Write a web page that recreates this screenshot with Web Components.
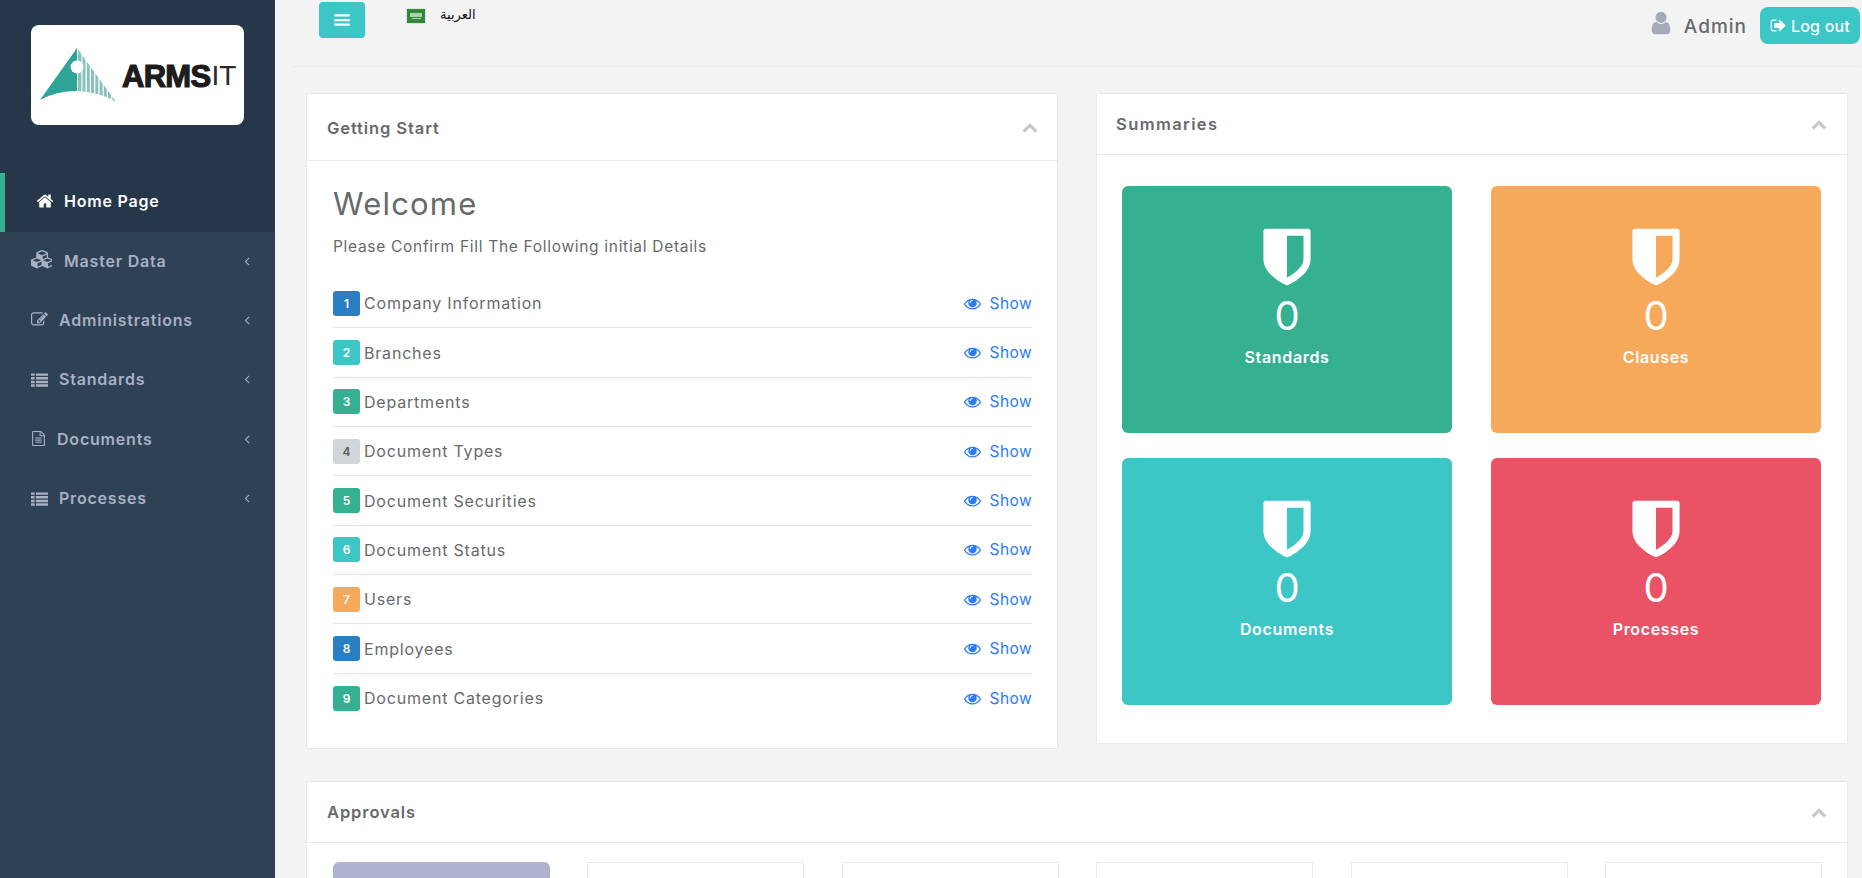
<!DOCTYPE html>
<html lang="en"><head><meta charset="utf-8"><title>ARMS IT</title>
<style>
html,body{margin:0;padding:0;height:878px;overflow:hidden;background:#f3f3f4;font-family:Inter,"Open Sans",sans-serif;color:#676a6c}
</style></head><body>
<dash-app>
  <side-bar slot="side">
    <nav-item icon="home" label="Home Page" active style="--pad:36px;--isize:18px;--gap:10px"></nav-item>
    <nav-item icon="cubes" label="Master Data" style="--pad:31px;--isize:21px;--gap:12px"></nav-item>
    <nav-item icon="edit" label="Administrations" style="--pad:31px;--isize:17px;--gap:11px"></nav-item>
    <nav-item icon="list" label="Standards" style="--pad:31px;--isize:17px;--gap:11px"></nav-item>
    <nav-item icon="file" label="Documents" style="--pad:31px;--isize:15px;--gap:11px"></nav-item>
    <nav-item icon="list" label="Processes" style="--pad:31px;--isize:17px;--gap:11px"></nav-item>
  </side-bar>
  <top-bar></top-bar>
  <div style="display:grid;grid-template-columns:752px 752px;column-gap:38px;align-items:start;margin-bottom:32px">
    <panel-box heading="Getting Start" style="--head:67px;--pl:20px;--tshift:1px">
      <welcome-block>
        <step-row n="1" color="#2a7fc4" label="Company Information"></step-row>
        <step-row n="2" color="#3cc6c6" label="Branches"></step-row>
        <step-row n="3" color="#35b192" label="Departments"></step-row>
        <step-row n="4" color="#d1d6db" ink="#5e5e5e" label="Document Types"></step-row>
        <step-row n="5" color="#35b192" label="Document Securities"></step-row>
        <step-row n="6" color="#3cc6c6" label="Document Status"></step-row>
        <step-row n="7" color="#f6a95a" label="Users"></step-row>
        <step-row n="8" color="#2a7fc4" label="Employees"></step-row>
        <step-row n="9" color="#35b192" label="Document Categories" last></step-row>
      </welcome-block>
    </panel-box>
    <panel-box heading="Summaries" style="--head:61px;--ts:1.4px;--pr:20px">
      <stat-grid>
        <stat-tile color="#35b192" label="Standards"></stat-tile>
        <stat-tile color="#f6a95a" label="Clauses"></stat-tile>
        <stat-tile color="#3cc6c6" label="Documents"></stat-tile>
        <stat-tile color="#ea5266" label="Processes"></stat-tile>
      </stat-grid>
    </panel-box>
  </div>
  <panel-box heading="Approvals" style="--head:61px;--pl:20px;--pr:20px">
    <approval-row>
      <approval-card filled></approval-card><approval-card></approval-card><approval-card></approval-card><approval-card></approval-card><approval-card></approval-card><approval-card></approval-card>
    </approval-row>
  </panel-box>
</dash-app>
<script>
const ICONS={
home:[1792,'M1472 992v480q0 26-19 45t-45 19h-384v-384h-256v384h-384q-26 0-45-19t-19-45v-480q0-1 .5-3t.5-3l575-474 575 474q1 2 1 6zm223-69l-62 74q-8 9-21 11h-3q-13 0-21-7l-692-577-692 577q-12 8-24 7-13-2-21-11l-62-74q-8-10-7-23.500t11-21.500l719-599q32-26 76-26t76 26l244 204v-195q0-14 9-23t23-9h192q14 0 23 9t9 23v408l219 182q10 8 11 21.500t-7 23.500z'],
cubes:[2048,'M640 1632l384-192v-314l-384 164v342zm-64-454l404-173-404-173-404 173zm1088 454l384-192v-314l-384 164v342zm-64-454l404-173-404-173-404 173zm-448-293l384-165v-266l-384 164v267zm-64-379l441-189-441-189-441 189zm1088 518v416q0 36-19 67t-52 47l-448 224q-25 14-57 14t-57-14l-448-224q-5-2-7-4-2 2-7 4l-448 224q-25 14-57 14t-57-14l-448-224q-33-16-52-47t-19-67v-416q0-38 21.500-70t56.500-48l434-186v-400q0-38 21.500-70t56.500-48l448-192q23-10 50-10t50 10l448 192q35 16 56.500 48t21.500 70v400l434 186q36 16 57 48t21 70z'],
edit:[1792,'M888 1184l116-116-152-152-116 116v56h96v96h56zm440-720q-16-16-33 1l-350 350q-17 17-1 33t33-1l350-350q17-17 1-33zm80 594v190q0 119-84.500 203.500t-203.500 84.500h-832q-119 0-203.500-84.500t-84.500-203.500v-832q0-119 84.500-203.500t203.500-84.500h832q63 0 117 25 15 7 18 23 3 17-9 29l-49 49q-14 14-32 8-23-6-45-6h-832q-66 0-113 47t-47 113v832q0 66 47 113t113 47h832q66 0 113-47t47-113v-126q0-13 9-22l64-64q15-15 35-7t20 29zm-96-738l288 288-672 672h-288v-288zm444 132l-92 92-288-288 92-92q28-28 68-28t68 28l152 152q28 28 28 68t-28 68z'],
list:[1792,'M0 256h384v256h-384zM512 256h1280v256h-1280zM0 640h384v256h-384zM512 640h1280v256h-1280zM0 1024h384v256h-384zM512 1024h1280v256h-1280zM0 1408h384v256h-384zM512 1408h1280v256h-1280z'],
file:[1792,'M1596 380q28 28 48 76t20 88v1152q0 40-28 68t-68 28h-1344q-40 0-68-28t-28-68v-1600q0-40 28-68t68-28h896q40 0 88 20t76 48zm-444-244v376h376q-10-29-22-41l-313-313q-12-12-41-22zm384 1528v-1024h-416q-40 0-68-28t-28-68v-416h-768v1536h1280zm-1024-864q0-14 9-23t23-9h704q14 0 23 9t9 23v64q0 14-9 23t-23 9h-704q-14 0-23-9t-9-23v-64zm736 224q14 0 23 9t9 23v64q0 14-9 23t-23 9h-704q-14 0-23-9t-9-23v-64q0-14 9-23t23-9h704zm0 256q14 0 23 9t9 23v64q0 14-9 23t-23 9h-704q-14 0-23-9t-9-23v-64q0-14 9-23t23-9h704z'],
user:[1792,'M1536 1399q0 109-62.500 187t-150.500 78h-854q-88 0-150.500-78t-62.500-187q0-85 8.500-160.500t31.500-152 58.500-131 94-89 134.500-34.500q131 128 313 128t313-128q76 0 134.500 34.500t94 89 58.500 131 31.500 152 8.500 160.500zm-256-887q0 159-112.500 271.500t-271.500 112.500-271.500-112.500-112.500-271.500 112.500-271.500 271.500-112.500 271.500 112.500 112.500 271.500z'],
signout:[1792,'M704 1440q0 4 1 20t.5 26.500-3 23.500-10 19.500-20.500 6.500h-320q-119 0-203.500-84.500t-84.500-203.500v-704q0-119 84.500-203.500t203.500-84.500h320q13 0 22.500 9.500t9.500 22.500q0 4 1 20t.5 26.500-3 23.500-10 19.500-20.500 6.500h-320q-66 0-113 47t-47 113v704q0 66 47 113t113 47h312l11.500 1 11.500 3 8 5.500 7 9 2 13.500zm928-544q0 26-19 45l-544 544q-19 19-45 19t-45-19-19-45v-288h-448q-26 0-45-19t-19-45v-384q0-26 19-45t45-19h448v-288q0-26 19-45t45-19 45 19l544 544q19 19 19 45z'],
eye:[1792,'M1664 960q-152-236-381-353 61 104 61 225 0 185-131.500 316.500t-316.500 131.500-316.500-131.500-131.500-316.500q0-121 61-225-229 117-381 353 133 205 333.500 326.500t434.500 121.500 434.500-121.500 333.500-326.500zm-720-384q0-20-14-34t-34-14q-125 0-214.500 89.500t-89.500 214.500q0 20 14 34t34 14 34-14 14-34q0-86 61-147t147-61q20 0 34-14t14-34zm848 384q0 34-20 69-140 230-376.500 368.500t-499.500 138.500-499.500-139-376.500-368q-20-35-20-69t20-69q140-229 376.500-368t499.500-139 499.500 139 376.500 368q20 35 20 69z'],
shield:[1792,'M1344 960v-640h-448v1137q119-63 213-137 235-184 235-360zm192-768v768q0 86-33.500 170.500t-83 150-118 127.500-126.500 103-121 77.500-89.500 49.500-42.500 20q-12 6-26 6t-26-6q-16-7-42.500-20t-89.500-49.500-121-77.500-126.500-103-118-127.500-83-150-33.500-170.500v-768q0-26 19-45t45-19h1152q26 0 45 19t19 45z'],
angle:[1792,'M1203 544q0 13-10 23l-393 393 393 393q10 10 10 23t-10 23l-50 50q-10 10-23 10t-23-10l-466-466q-10-10-10-23t10-23l466-466q10-10 23-10t23 10l50 50q10 10 10 23z'],
chevron:[1792,'M1683 1331l-166 165q-19 19-45 19t-45-19l-531-531-531 531q-19 19-45 19t-45-19l-166-165q-19-19-19-45.500t19-45.500l742-741q19-19 45-19t45 19l742 741q19 19 19 45.500t-19 45.500z'],
bars:[1792,'M128 320h1536v224h-1536zM128 784h1536v224h-1536zM128 1248h1536v224h-1536z']
};
function def(name,css,html){
  customElements.define(name,class extends HTMLElement{
    connectedCallback(){
      if(this.shadowRoot)return;
      const a=n=>this.getAttribute(n);
      this.attachShadow({mode:'open'}).innerHTML='<style>'+css+'</style>'+(typeof html==='function'?html(a,this):html);
    }
  });
}
def('fa-icon',':host{display:inline-flex;flex:none;width:var(--s,16px);height:var(--s,16px)}svg{width:100%;height:100%;display:block;fill:currentColor}',
 a=>{const i=ICONS[a('name')];return `<svg viewBox="0 0 ${i[0]} ${i[0]}" aria-hidden="true"><path d="${i[1]}"/></svg>`});

def('dash-app',`:host{display:flex;width:1862px;height:878px;overflow:hidden}
 .side{flex:none;width:275px;height:878px}
 main{flex:1;min-width:0;height:878px;overflow:hidden;padding:0 14px 0 31px;box-sizing:border-box}`,
 `<div class="side"><slot name="side"></slot></div><main><slot></slot></main>`);

def('arms-logo',`:host{display:flex;align-items:center;width:213px;height:100px;background:#fff;border-radius:8px;box-sizing:border-box;padding:23px 0 23px 9px;gap:6px;overflow:hidden}
 svg{flex:none;width:76px;height:54px;display:block}
 .t{font:700 31px/1 "Liberation Sans",sans-serif;color:#1c1c1c;-webkit-text-stroke:1.2px #1c1c1c;display:flex;align-items:center;white-space:nowrap;margin-top:2px;letter-spacing:-.7px}
 .it{font-weight:400;-webkit-text-stroke:0;letter-spacing:0;font-size:28px;margin-left:1px;color:#2a2a2a}`,
 `<svg viewBox="0 0 76 54"><defs><clipPath id="r"><path d="M37 0 76 54Q60 44 37 43V0Z"/></clipPath></defs>
 <path d="M37 0V43Q16 43 0 52Z" fill="#2ea497"/>
 <g clip-path="url(#r)" fill="#86c2bb"><rect x="38" y="0" width="3.400" height="54"/><rect x="42.500" y="0" width="3" height="54"/><rect x="46.800" y="0" width="3" height="54"/><rect x="51" y="0" width="3" height="54"/><rect x="55.300" y="0" width="3" height="54"/><rect x="59.600" y="0" width="3" height="54"/><rect x="63.800" y="0" width="3" height="54"/><rect x="68" y="0" width="3" height="54"/><rect x="72.200" y="0" width="3" height="54"/></g>
 <circle cx="37" cy="19" r="6.500" fill="#fff"/></svg>
 <div class="t">ARMS<span class="it">IT</span></div>`);

def('side-bar',`:host{display:block;width:275px;height:878px;background:#2f4155;overflow:hidden}
 .head{background:#26374a;height:173px;box-sizing:border-box;padding:25px 0 0 31px}`,
 `<div class="head"><arms-logo></arms-logo></div><slot></slot>`);

def('nav-item',`:host{display:flex;align-items:center;height:59.400px;box-sizing:border-box;padding:0 21px 3px var(--pad,31px);color:#a7b1c2;position:relative;font-weight:600;font-size:16px;letter-spacing:.8px}
 :host([active]){color:#fff;background:#26374a}
 :host([active])::before{content:"";position:absolute;left:0;top:0;bottom:0;width:5px;background:#35b192}
 fa-icon{--s:var(--isize,17px);margin-right:var(--gap,11px)}
 .l{flex:1;white-space:nowrap}
 .a{--s:14px;margin:0}`,
 (a,el)=>`<fa-icon name="${a('icon')}"></fa-icon><span class="l">${a('label')}</span>${el.hasAttribute('active')?'':'<fa-icon class="a" name="angle"></fa-icon>'}`);

def('top-bar',`:host{display:flex;align-items:flex-start;height:67px;margin:0 -12px 26px -13px;border-bottom:1px solid #e7eaec;box-sizing:border-box}
 .menu{margin:2px 0 0 26px;width:46px;height:36px;border-radius:4px;background:#3cc6c6;color:#fff;display:flex;align-items:center;justify-content:center;--s:18px}
 .flag{margin:9px 0 0 42px;width:18px;height:14px;background:#2f8b3a;display:flex;flex-direction:column;align-items:center;justify-content:center;gap:1px;box-shadow:0 0 1px #6b8f6e}
 .flag i{display:block;background:#a9d2a9}.flag i:first-child{width:12px;height:4px}.flag i:last-child{width:9px;height:1px}
 .ar{margin:6px 0 0 15px;font:13px/17px "Liberation Sans","DejaVu Sans",sans-serif;color:#111}
 .sp{flex:1}
 .user{--s:26px;color:#a4aaba;margin:10px 10px 0 0}
 .name{margin:14px 13px 0 0;font-size:19px;line-height:25px;font-weight:500;letter-spacing:1px;color:#676a6c}
 .out{margin-top:7px;width:100px;height:37px;box-sizing:border-box;border-radius:8px;background:#3cc6c6;color:#fff;display:flex;align-items:center;justify-content:center;gap:4px;font-size:16px;font-weight:500;letter-spacing:.2px;white-space:nowrap;--s:17px}`,
 `<div class="menu"><fa-icon name="bars"></fa-icon></div><div class="flag"><i></i><i></i></div><span class="ar" dir="rtl" lang="ar">العربية</span><span class="sp"></span><fa-icon class="user" name="user"></fa-icon><span class="name">Admin</span><div class="out"><fa-icon name="signout"></fa-icon>Log out</div>`);

def('panel-box',`:host{display:block;background:#fff;border:1px solid #e7eaec;box-sizing:border-box;border-radius:2px}
 header{display:flex;align-items:center;justify-content:space-between;height:var(--head,60px);box-sizing:border-box;border-bottom:1px solid #e7eaec;padding:0 var(--pr,19px) 0 var(--pl,19px)}
 h2{margin:0;font-size:16.500px;font-weight:600;letter-spacing:var(--ts,.9px);color:#676a6c;padding-top:var(--tshift,0)}
 fa-icon{--s:16px;color:#c8c8c8}`,
 a=>`<header><h2>${a('heading')}</h2><fa-icon name="chevron"></fa-icon></header><slot></slot>`);

def('welcome-block',`:host{display:block;padding:21px 25px 25px 26px}
 h1{margin:0;font-size:31px;line-height:44px;font-weight:400;letter-spacing:1.2px;color:#676a6c}
 p{margin:10px 0 21px;font-size:15.500px;line-height:22px;letter-spacing:.7px;color:#676a6c}`,
 `<h1>Welcome</h1><p>Please Confirm Fill The Following initial Details</p><slot></slot>`);

def('step-row',`:host{display:flex;align-items:center;height:49.350px;box-sizing:border-box;border-bottom:1px solid #dfe5e8;font-size:16px;letter-spacing:.8px;color:#676a6c}
 :host([last]){border-bottom:0}
 .n{flex:none;width:27px;height:25px;border-radius:3px;display:flex;align-items:center;justify-content:center;font-size:12px;font-weight:600;letter-spacing:0;margin-right:4px}
 .l{flex:1}
 .s{display:flex;align-items:center;gap:9px;color:#2b7cf6;font-size:15.500px;letter-spacing:.4px;--s:17px}`,
 a=>`<span class="n" style="background:${a('color')};color:${a('ink')||'#fff'}">${a('n')}</span><span class="l">${a('label')}</span><span class="s"><fa-icon name="eye"></fa-icon>Show</span>`);

def('stat-grid',`:host{display:grid;grid-template-columns:330px 330px;grid-auto-rows:247px;column-gap:39px;row-gap:25px;padding:31px 26px 38px 25px}`,`<slot></slot>`);

def('stat-tile',`:host{display:flex;flex-direction:column;align-items:center;border-radius:6px;color:#fff;padding-top:38px;box-sizing:border-box}
 fa-icon{--s:66px}
 .v{font-size:40px;line-height:46px;font-weight:400;margin-top:3px}
 .l{font-size:16px;line-height:22px;font-weight:600;letter-spacing:.65px;margin-top:7px}`,
 a=>`<style>:host{background:${a('color')}}</style><fa-icon name="shield"></fa-icon><span class="v">0</span><span class="l">${a('label')}</span>`);

def('approval-row',`:host{display:grid;grid-template-columns:repeat(6,217px);column-gap:37.500px;padding:19px 25px 30px 25.500px;height:200px;box-sizing:border-box}`,`<slot></slot>`);
def('approval-card',`:host{display:block;height:170px;border:1px solid #e7eaec;box-sizing:border-box}
 :host([filled]){background:#b0b3d0;border:0;border-radius:6px}`,``);
</script>
</body></html>
